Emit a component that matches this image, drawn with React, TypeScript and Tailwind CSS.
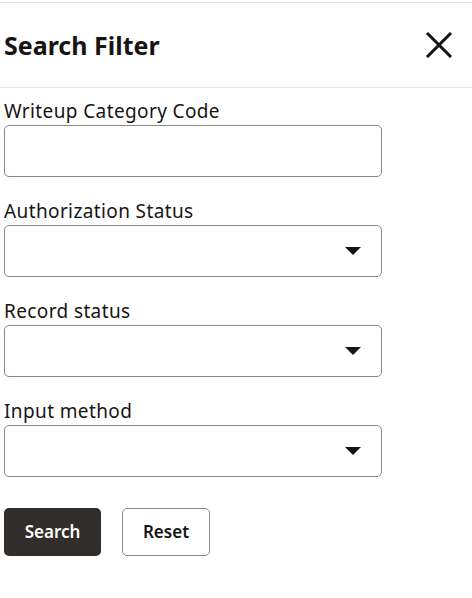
import React, { useState } from 'react';

const font = { fontFamily: '"Noto Sans", "Open Sans", sans-serif' };

const Caret = () => (
  <svg width="18" height="10" viewBox="0 0 18 10" className="shrink-0">
    <path d="M1 1 L17 1 L9 9 Z" fill="#161513" />
  </svg>
);

interface SelectFieldProps {
  label: string;
}

const SelectField: React.FC<SelectFieldProps> = ({ label }) => (
  <div className="flex flex-col">
    <label className="text-[19px] leading-[24px] tracking-[0.02em] text-[#161513]">{label}</label>
    <div className="mt-[2px] flex h-[52px] w-[378px] items-center justify-end rounded-[5px] border border-[#8c8884] pr-[19px]">
      <Caret />
    </div>
  </div>
);

export default function App() {
  const [code, setCode] = useState('');

  return (
    <div className="h-[598px] w-[472px] bg-white pt-[2px] text-[#161513]" style={font}>
      <div className="flex h-[86px] items-center justify-between border-y border-[#e5e3e0] pl-[4px] pr-[19px]">
        <h1 className="text-[25px] font-bold leading-none">Search Filter</h1>
        <button className="flex h-[28px] w-[28px] items-center justify-center">
          <svg width="28" height="26" viewBox="0 0 28 26">
            <path d="M2 1 L26 25 M26 1 L2 25" stroke="#161513" strokeWidth="3" />
          </svg>
        </button>
      </div>

      <div className="flex flex-col gap-[22px] px-[4px] pt-[11px]">
        <div className="flex flex-col">
          <label className="text-[19px] leading-[24px] tracking-[0.02em]">Writeup Category Code</label>
          <input
            value={code}
            onChange={(e) => setCode(e.target.value)}
            className="mt-[2px] h-[52px] w-[378px] rounded-[5px] border border-[#8c8884] px-3 outline-none"
          />
        </div>
        <SelectField label="Authorization Status" />
        <SelectField label="Record status" />
        <SelectField label="Input method" />
      </div>

      <div className="mt-[31px] flex gap-[21px] px-[4px]">
        <button className="h-[48px] w-[97px] rounded-[5px] bg-[#312d2a] text-[17px] font-semibold text-white">
          Search
        </button>
        <button className="h-[48px] w-[88px] rounded-[5px] border border-[#8c8884] text-[17px] font-semibold text-[#161513]">
          Reset
        </button>
      </div>
    </div>
  );
}
